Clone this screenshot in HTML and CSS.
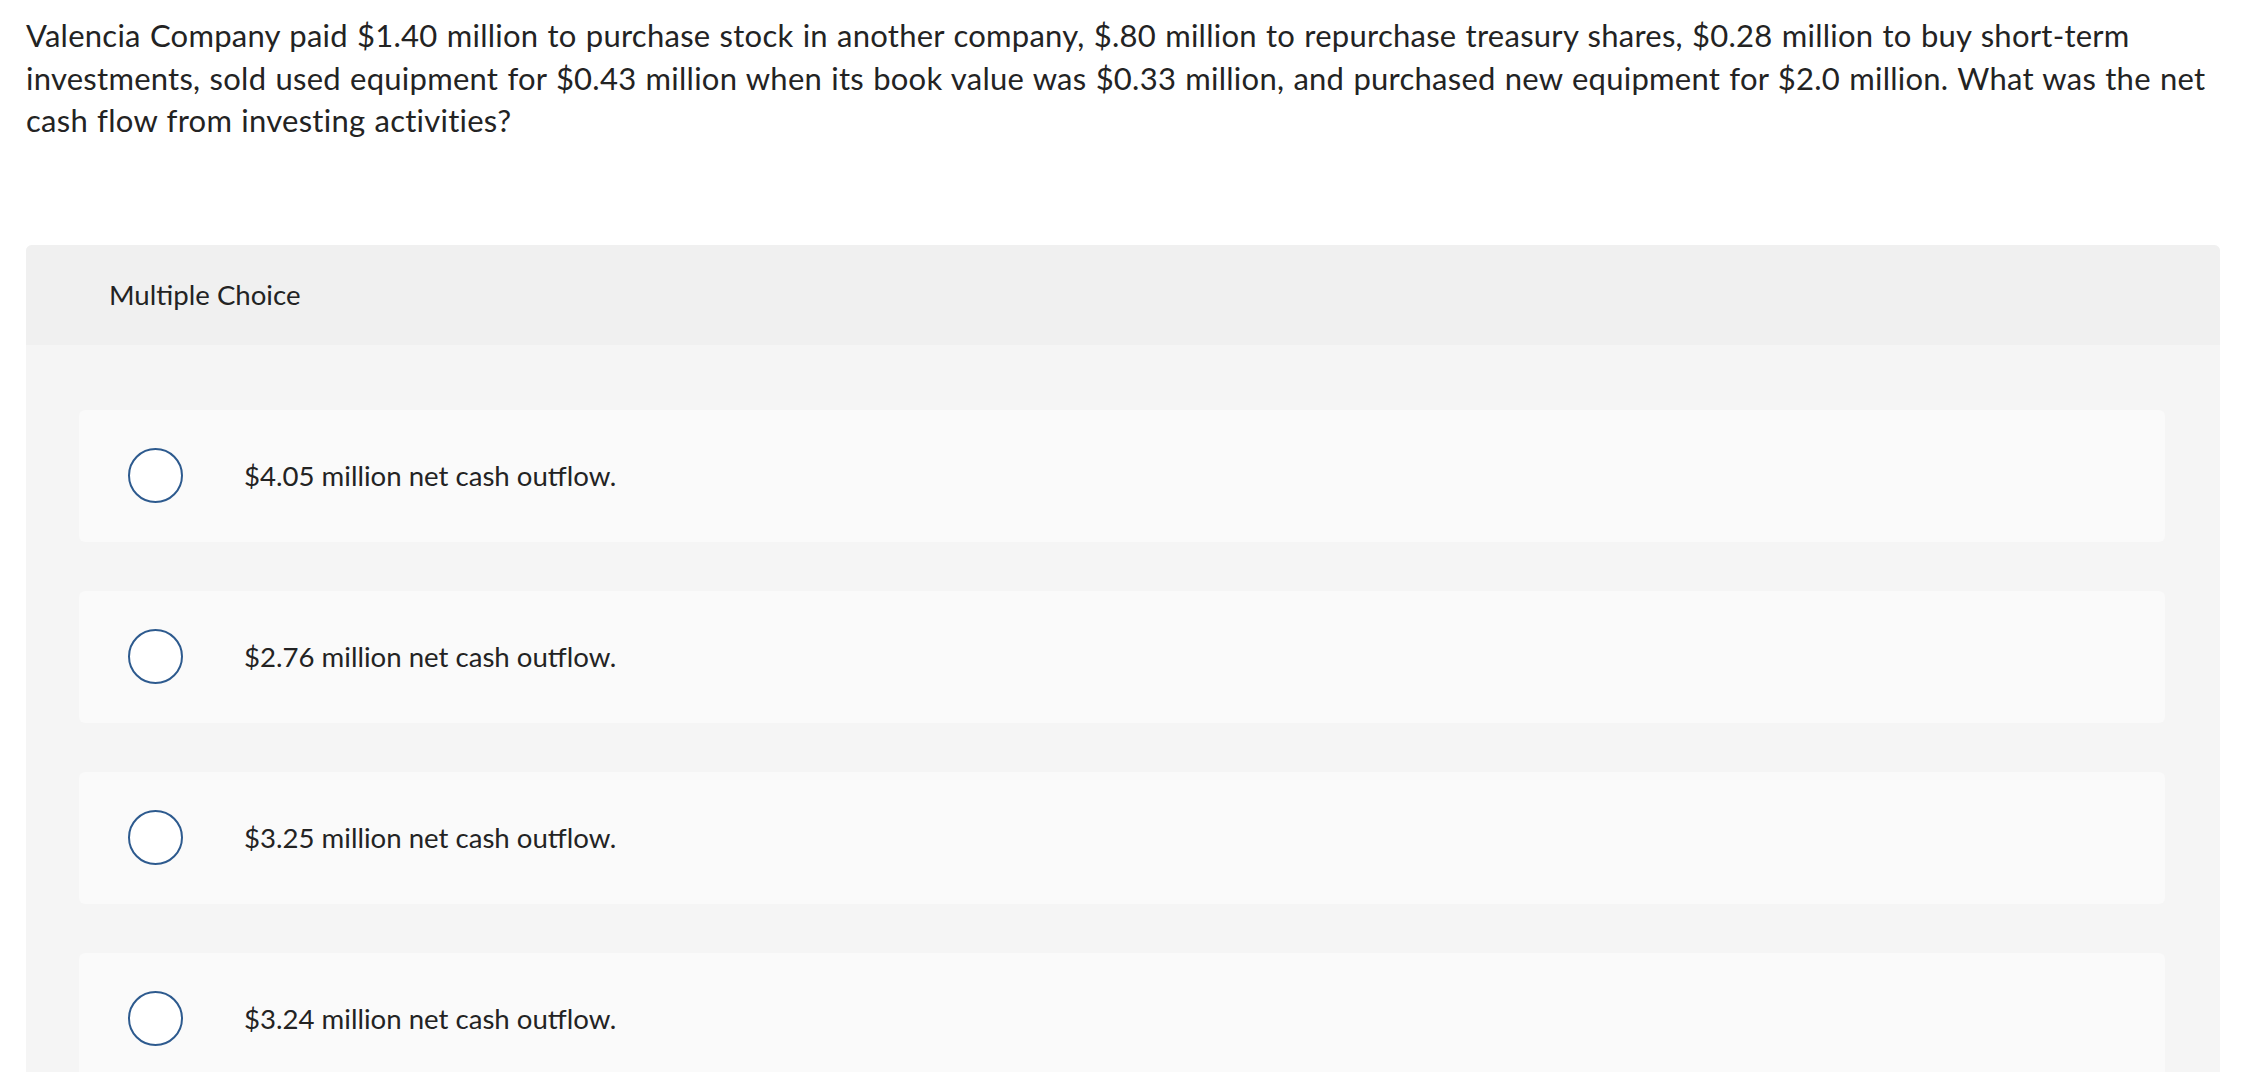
FILE: index.html
```html
<!DOCTYPE html>
<html>
<head>
<meta charset="utf-8">
<link rel="stylesheet" href="styles.css">
</head>
<body>
<div class="page">
  <p class="question">Valencia Company paid $1.40 million to purchase stock in another company, $.80 million to repurchase treasury shares, $0.28 million to buy short-term investments, sold used equipment for $0.43 million when its book value was $0.33 million, and purchased new equipment for $2.0 million. What was the net cash flow from investing activities?</p>
  <div class="card">
    <div class="card-header">Multiple Choice</div>
    <div class="card-body">
      <label class="option"><span class="radio"></span><span class="option-text">$4.05 million net cash outflow.</span></label>
      <label class="option"><span class="radio"></span><span class="option-text">$2.76 million net cash outflow.</span></label>
      <label class="option"><span class="radio"></span><span class="option-text">$3.25 million net cash outflow.</span></label>
      <label class="option"><span class="radio"></span><span class="option-text">$3.24 million net cash outflow.</span></label>
    </div>
  </div>
</div>
</body>
</html>
```
FILE: styles.css
```css
html, body {
  margin: 0;
  padding: 0;
  background: #ffffff;
}
body {
  font-family: Lato, "Open Sans", sans-serif;
  color: #232323;
}
.page {
  padding: 14px 36px 0 26px;
}
.question {
  margin: 0 -24px 0 0;
  font-size: 31px;
  letter-spacing: 0.25px;
  word-spacing: 1px;
  line-height: 42.5px;
}
.card {
  margin-top: 103px;
  border-radius: 6px 6px 0 0;
  overflow: hidden;
  background: #f5f5f5;
}
.card-header {
  background: #f0f0f0;
  height: 100px;
  display: flex;
  align-items: center;
  padding-left: 83px;
  font-size: 27.6px;
}
.card-body {
  padding: 65px 55px 40px 53px;
  display: flex;
  flex-direction: column;
  gap: 49px;
}
.option {
  background: #fafafa;
  border-radius: 6px;
  height: 132px;
  display: flex;
  align-items: center;
  padding-left: 49px;
}
.radio {
  width: 51px;
  height: 51px;
  border: 2.5px solid #2d5a8e;
  border-radius: 50%;
  background: #ffffff;
  flex-shrink: 0;
}
.option-text {
  margin-left: 61px;
  font-size: 27.6px;
}
```
